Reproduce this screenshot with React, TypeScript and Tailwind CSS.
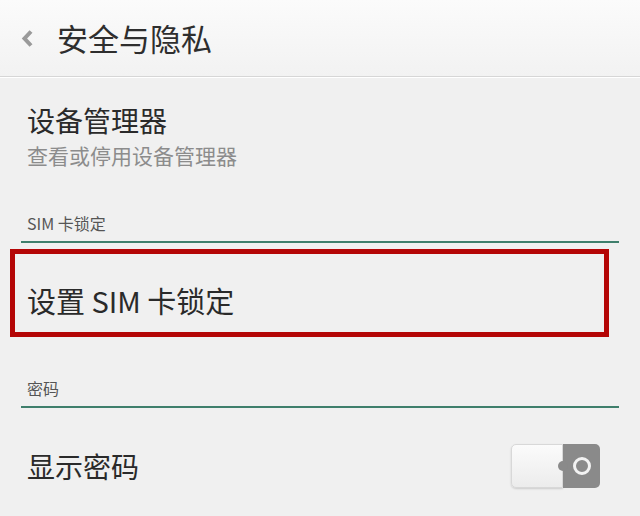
import React from "react";

const font = { fontFamily: '"Noto Sans CJK SC", "Noto Sans", sans-serif' };

// section label with the green rule under it
const Category = ({ label, className }: { label: string; className?: string }) => (
  <div className={className}>
    <p className="mb-[7px] pl-[27px] text-[16px] leading-[22px] text-[#555555]">{label}</p>
    <div className="ml-[21px] mr-[21px] h-[2px] bg-[#3f7f6c]" />
  </div>
);

const Toggle = () => (
  <div className="flex h-[44px] w-[89px] items-stretch">
    <div className="w-[52px] rounded-l-[5px] border border-[#d8d8d8] bg-gradient-to-b from-[#fbfbfb] to-[#ececec] shadow-[0_1px_2px_rgba(0,0,0,0.15)]" />
    <div className="relative flex flex-1 items-center justify-center rounded-r-[5px] bg-[#8a8a8a]">
      <div className="absolute -left-[5px] top-1/2 h-[10px] w-[10px] -translate-y-1/2 rounded-full bg-[#8a8a8a]" />
      <div className="h-[18px] w-[18px] rounded-full border-[3px] border-[#f2f2f2]" />
    </div>
  </div>
);

export default function App() {
  return (
    <div style={font} className="h-[516px] w-[640px] overflow-hidden bg-[#f0f0f0] text-[#2a2a2a]">
      {/* Header */}
      <div className="flex h-[77px] items-center border-b border-[#d6d6d6] bg-gradient-to-b from-[#fbfbfb] to-[#f2f2f2] pl-[21px] shadow-[0_1px_0_#ffffff]">
        <svg width="14" height="17" viewBox="0 0 14 17" className="mt-[1px]">
          <path d="M10 1.5 L3.5 8.5 L10 15.5" fill="none" stroke="#9a9a9a" strokeWidth="4" strokeLinejoin="miter" />
        </svg>
        <h1 className="ml-[22px] text-[31px] leading-[40px] text-[#2e2e2e]">安全与隐私</h1>
      </div>

      {/* 设备管理器 */}
      <div className="pl-[27px] pt-[26px]">
        <p className="text-[28px] leading-[34px] text-[#2a2a2a]">设备管理器</p>
        <p className="mt-[5px] text-[21px] leading-[26px] text-[#8c8c8c]">查看或停用设备管理器</p>
      </div>

      <Category label="SIM 卡锁定" className="mt-[44px]" />

      {/* highlighted row */}
      <div className="ml-[10px] mt-[6px] flex h-[88px] w-[599px] items-center border-[5px] border-[#b40606] pl-[12px] pt-[14px]">
        <p className="text-[29px] leading-[34px] text-[#2a2a2a]">设置 SIM 卡锁定</p>
      </div>

      <Category label="密码" className="mt-[40px]" />

      {/* 显示密码 */}
      <div className="flex h-[80px] items-center justify-between pl-[27px] pr-[40px] pt-[36px]">
        <p className="text-[28px] leading-[34px] text-[#2a2a2a]">显示密码</p>
        <Toggle />
      </div>
    </div>
  );
}
